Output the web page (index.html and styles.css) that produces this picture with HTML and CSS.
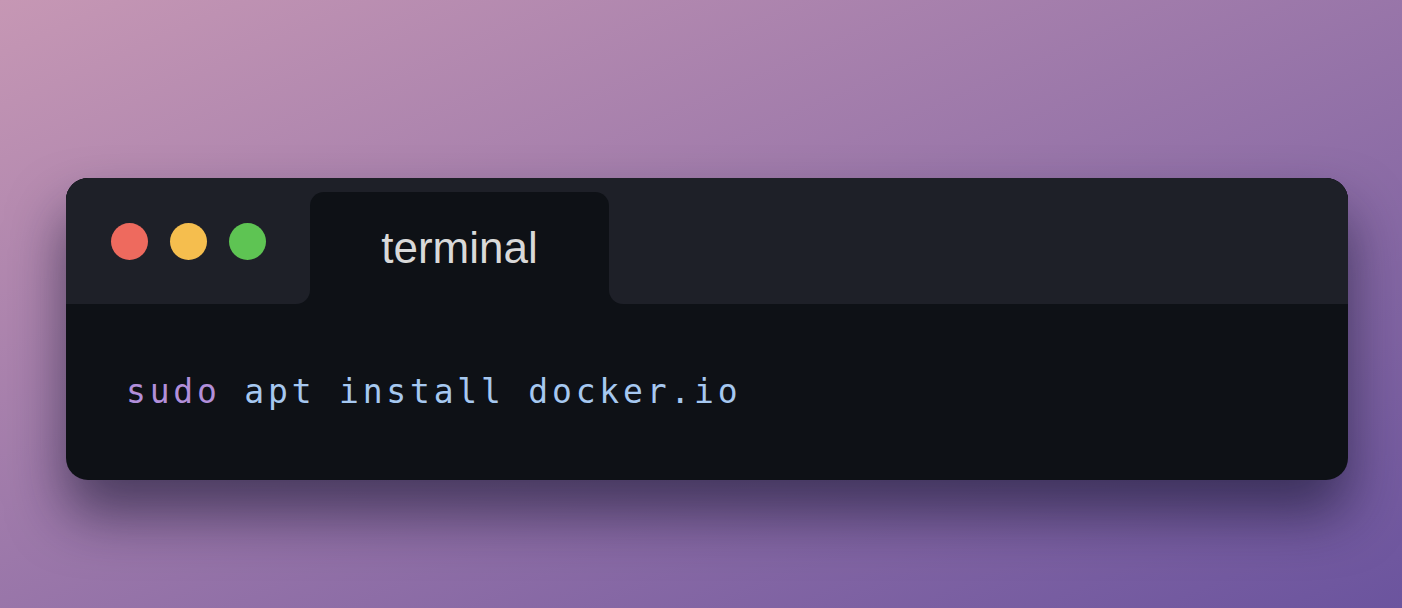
FILE: index.html
```html
<!DOCTYPE html>
<html lang="en">
<head>
<meta charset="utf-8">
<title>terminal</title>
<link rel="stylesheet" href="styles.css">
</head>
<body>
<div class="stage">
  <div class="window">
    <div class="titlebar">
      <div class="lead">
        <span class="dot dot-red"></span>
        <span class="dot dot-yellow"></span>
        <span class="dot dot-green"></span>
      </div>
      <div class="tabwrap">
        <div class="tab">terminal</div>
      </div>
      <div class="rest"></div>
    </div>
    <div class="body">
      <code class="cmd"><span class="kw">sudo</span> <span class="arg">apt install docker.io</span></code>
    </div>
  </div>
</div>
</body>
</html>
```
FILE: styles.css
```css
html, body {
  margin: 0;
  padding: 0;
}
body {
  width: 1402px;
  height: 608px;
  overflow: hidden;
  background: linear-gradient(to bottom right, #c697b4, #6b549e);
}
.stage {
  box-sizing: border-box;
  height: 608px;
  padding: 178px 54px 0 66px;
  border-left: 2px solid rgba(255, 255, 255, 0.08);
  margin-left: -2px;
}
.window {
  display: flex;
  flex-direction: column;
  height: 302px;
  border-radius: 22px;
  overflow: hidden;
  background: #0e1116;
  box-shadow: 0 34px 56px rgba(18, 18, 45, 0.6);
}
.titlebar {
  display: flex;
  height: 126px;
  background: #0e1116;
}
.lead {
  width: 244px;
  box-sizing: border-box;
  padding-left: 45px;
  display: flex;
  align-items: center;
  gap: 22px;
  background: #1e2028;
  border-bottom-right-radius: 14px;
}
.dot {
  width: 37px;
  height: 37px;
  border-radius: 50%;
  flex: none;
}
.dot-red { background: #ee6a5e; }
.dot-yellow { background: #f5be4e; }
.dot-green { background: #5ec453; }
.tabwrap {
  width: 299px;
  padding-top: 14px;
  display: flex;
  background: #1e2028;
}
.tab {
  flex: 1;
  display: flex;
  align-items: center;
  justify-content: center;
  background: #0e1116;
  border-radius: 14px 14px 0 0;
  color: #d9d9d9;
  font-family: "Liberation Sans", Arial, sans-serif;
  font-size: 44px;
}
.rest {
  flex: 1;
  background: #1e2028;
  border-bottom-left-radius: 14px;
}
.body {
  flex: 1;
  display: flex;
  align-items: center;
  padding-left: 60px;
}
.cmd {
  font-family: "DejaVu Sans Mono", monospace;
  font-size: 33px;
  letter-spacing: 3.8px;
  white-space: pre;
  margin-top: -2px;
}
.kw { color: #b28fda; }
.arg { color: #a6c8f0; }
```
